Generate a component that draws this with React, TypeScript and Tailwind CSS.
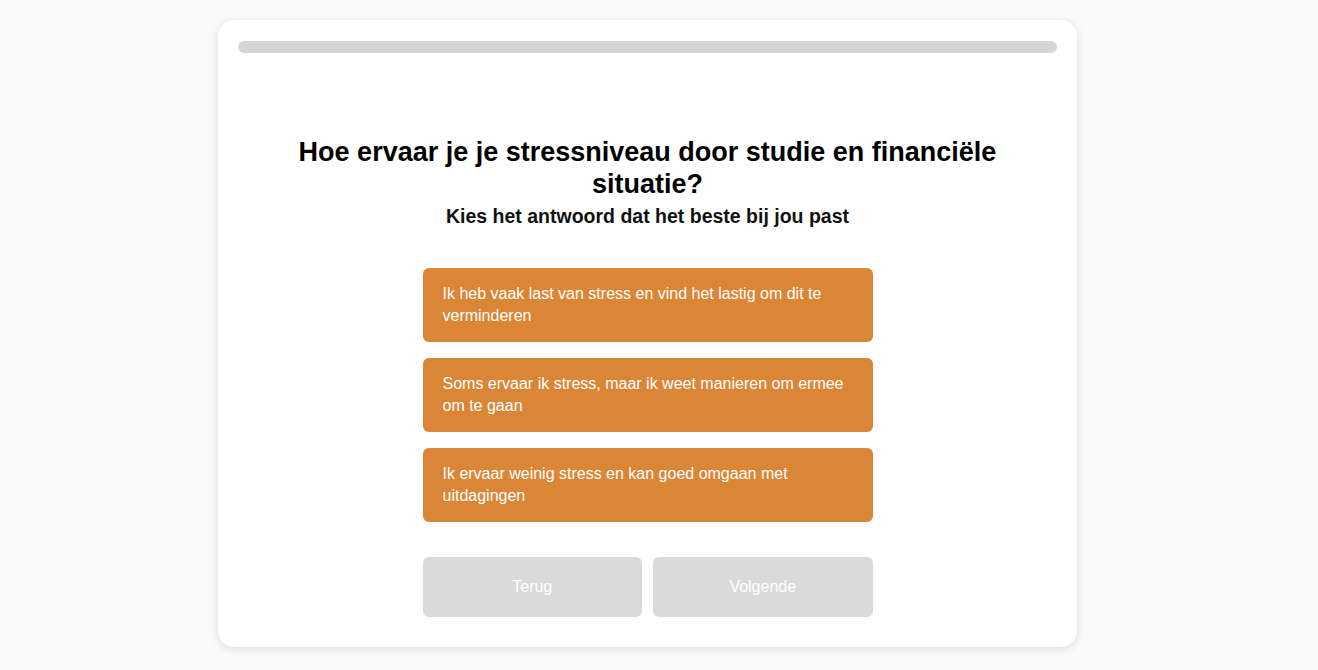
const options = [
  "Ik heb vaak last van stress en vind het lastig om dit te verminderen",
  "Soms ervaar ik stress, maar ik weet manieren om ermee om te gaan",
  "Ik ervaar weinig stress en kan goed omgaan met uitdagingen",
];

const App = () => {
  return (
    <div
      className="min-h-[670px] w-full bg-[#fafafa] pt-5"
      style={{ fontFamily: '"Liberation Sans", Arial, sans-serif' }}
    >
      <div className="ml-[218px] flex h-[627px] w-[859px] flex-col rounded-2xl bg-white px-5 pt-[21px] shadow-[0_2px_10px_rgba(0,0,0,0.12)]">
        <div className="h-3 w-full rounded-full bg-[#d6d6d6]" />

        <h1 className="mx-auto mt-[83px] w-[780px] text-center text-[27px] font-bold leading-8 text-black">
          Hoe ervaar je je stressniveau door studie en financiële situatie?
        </h1>
        <p className="mt-1 text-center text-[19.5px] font-bold leading-6 text-[#111]">
          Kies het antwoord dat het beste bij jou past
        </p>

        <div className="mx-auto mt-10 flex w-[450px] flex-col gap-4">
          {options.map((text, i) => (
            <button
              key={i}
              className="h-[74px] rounded-md bg-[#db8537] px-5 text-left text-[16px] leading-[22px] text-white"
            >
              {text}
            </button>
          ))}
        </div>

        <div className="mx-auto mt-[35px] flex w-[450px] gap-[11px]">
          <button className="h-[60px] flex-1 rounded-md bg-[#dadada] text-[16px] text-white">
            Terug
          </button>
          <button className="h-[60px] flex-1 rounded-md bg-[#dadada] text-[16px] text-white">
            Volgende
          </button>
        </div>
      </div>
    </div>
  );
};

export default App;
